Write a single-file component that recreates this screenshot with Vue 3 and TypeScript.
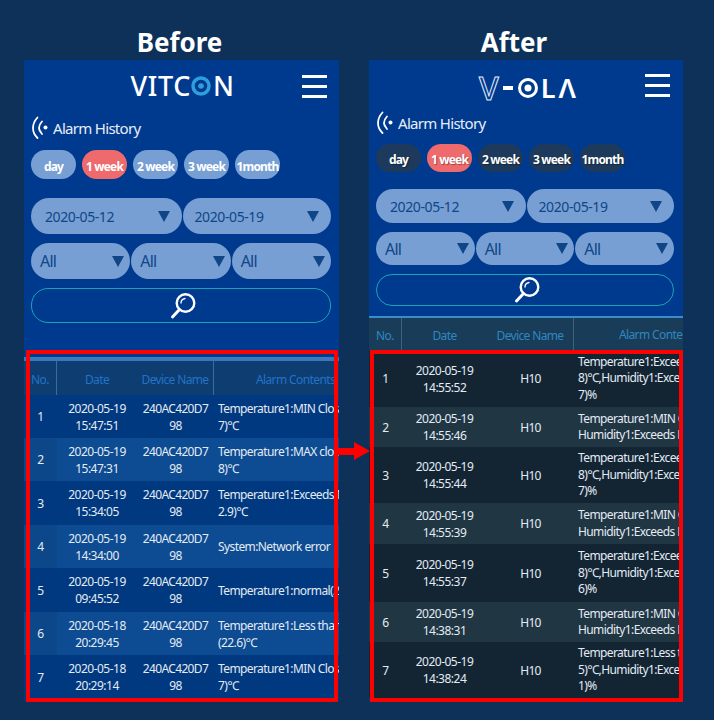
<script setup lang="ts">
interface Row {
  no: number;
  date: string;
  time: string;
  device: string[];
  content: string[];
  height: number;
}

const periods = ["day", "1 week", "2 week", "3 week", "1month"];

const beforeRows: Row[] = [
  { no: 1, date: "2020-05-19", time: "15:47:51", device: ["240AC420D7", "98"], content: ["Temperature1:MIN Close(28.", "7)℃"], height: 43 },
  { no: 2, date: "2020-05-19", time: "15:47:31", device: ["240AC420D7", "98"], content: ["Temperature1:MAX close(28.", "8)℃"], height: 43 },
  { no: 3, date: "2020-05-19", time: "15:34:05", device: ["240AC420D7", "98"], content: ["Temperature1:Exceeds MAX(3", "2.9)℃"], height: 44 },
  { no: 4, date: "2020-05-19", time: "14:34:00", device: ["240AC420D7", "98"], content: ["System:Network error"], height: 43 },
  { no: 5, date: "2020-05-19", time: "09:45:52", device: ["240AC420D7", "98"], content: ["Temperature1:normal(25.1)℃"], height: 44 },
  { no: 6, date: "2020-05-18", time: "20:29:45", device: ["240AC420D7", "98"], content: ["Temperature1:Less than MIN", "(22.6)℃"], height: 43 },
  { no: 7, date: "2020-05-18", time: "20:29:14", device: ["240AC420D7", "98"], content: ["Temperature1:MIN Close(28.", "7)℃"], height: 44 },
];

const afterRows: Row[] = [
  { no: 1, date: "2020-05-19", time: "14:55:52", device: ["H10"], content: ["Temperature1:Exceeds MAX(3", "8)℃,Humidity1:Exceeds MAX", "7)%"], height: 57 },
  { no: 2, date: "2020-05-19", time: "14:55:46", device: ["H10"], content: ["Temperature1:MIN Close(28)", "Humidity1:Exceeds MAX(7)"], height: 40 },
  { no: 3, date: "2020-05-19", time: "14:55:44", device: ["H10"], content: ["Temperature1:Exceeds MAX(3", "8)℃,Humidity1:Exceeds MAX", "7)%"], height: 56 },
  { no: 4, date: "2020-05-19", time: "14:55:39", device: ["H10"], content: ["Temperature1:MIN Close(28)", "Humidity1:Exceeds MAX(7)"], height: 41 },
  { no: 5, date: "2020-05-19", time: "14:55:37", device: ["H10"], content: ["Temperature1:Exceeds MAX(3", "8)℃,Humidity1:Exceeds MAX", "6)%"], height: 58 },
  { no: 6, date: "2020-05-19", time: "14:38:31", device: ["H10"], content: ["Temperature1:MIN Close(28)", "Humidity1:Exceeds MAX(7)"], height: 40 },
  { no: 7, date: "2020-05-19", time: "14:38:24", device: ["H10"], content: ["Temperature1:Less than MIN(2", "5)℃,Humidity1:Exceeds MAX", "1)%"], height: 56 },
];

const panels = [
  { key: "before", title: "Before", rows: beforeRows },
  { key: "after", title: "After", rows: afterRows },
];
</script>

<template>
  <div class="page">
    <section v-for="panel in panels" :key="panel.key" class="col" :class="panel.key">
      <h2 class="title">{{ panel.title }}</h2>
      <div class="phone">
        <header class="top">
          <div v-if="panel.key === 'before'" class="logo vitcon">
            <span>VITC</span>
            <svg class="ring" width="20" height="20" viewBox="0 0 20 20">
              <circle cx="10" cy="10" r="8" fill="none" stroke="#2e9fdc" stroke-width="3.5" />
              <circle cx="10" cy="10" r="2.8" fill="#2e9fdc" />
            </svg>
            <span>N</span>
          </div>
          <div v-else class="logo vola">
            <span class="hollow">V</span>
            <span class="dash"></span>
            <svg class="ring" width="20" height="20" viewBox="0 0 20 20">
              <circle cx="10" cy="10" r="8.5" fill="none" stroke="#fff" stroke-width="3" />
              <circle cx="10" cy="10" r="3.5" fill="#fff" />
            </svg>
            <span>LΛ</span>
          </div>
          <div class="burger"><i></i><i></i><i></i></div>
        </header>

        <div class="heading">
          <svg width="18" height="24" viewBox="0 0 18 24" fill="none" stroke="#fff" stroke-linecap="round">
            <path d="M6.5 1.5C.5 8 .5 16 6.5 22" stroke-width="1.8" />
            <path d="M11 5.5C7.2 9.5 7.2 14 11 18" stroke-width="1.8" />
            <circle cx="14.5" cy="11.5" r="2" fill="#fff" stroke="none" />
          </svg>
          <span>Alarm History</span>
        </div>

        <div class="periods">
          <span v-for="p in periods" :key="p" class="period" :class="{ on: p === '1 week' }">{{ p }}</span>
        </div>

        <div class="filters dates">
          <div class="select"><span>2020-05-12</span><b class="caret"></b></div>
          <div class="select"><span>2020-05-19</span><b class="caret"></b></div>
        </div>
        <div class="filters alls">
          <div class="select"><span>All</span><b class="caret"></b></div>
          <div class="select"><span>All</span><b class="caret"></b></div>
          <div class="select"><span>All</span><b class="caret"></b></div>
        </div>
        <div class="search">
          <svg width="26" height="28" viewBox="0 0 26 28" fill="none" stroke="#fff" stroke-linecap="round">
            <circle cx="15.5" cy="11" r="8.8" stroke-width="2.4" />
            <path d="M9.5 17.5L2.5 25" stroke-width="3" />
            <path d="M11 11C11 8.5 12.5 7 15 6.5" stroke-width="1.3" />
          </svg>
        </div>

        <div class="table">
          <div class="row head">
            <div class="c no">No.</div>
            <div class="c date">Date</div>
            <div class="c device">Device Name</div>
            <div class="c content"><span class="alarm-head">Alarm Contents</span></div>
          </div>
          <div
            v-for="r in panel.rows"
            :key="r.no"
            class="row body"
            :style="{ height: r.height + 'px' }"
          >
            <div class="c no">{{ r.no }}</div>
            <div class="c date">{{ r.date }}<br />{{ r.time }}</div>
            <div class="c device">
              <span>
                <template v-for="d in r.device" :key="d">{{ d }}<br /></template>
              </span>
            </div>
            <div class="c content">
              <div v-for="line in r.content" :key="line">{{ line }}</div>
            </div>
          </div>
        </div>
      </div>
      <div class="redbox"></div>
    </section>

    <svg class="arrow" width="34" height="18" viewBox="0 0 34 18">
      <path d="M0 6H17V0L33 9L17 18V13H0Z" fill="#f00" />
    </svg>
  </div>
</template>

<style>
html,
body {
  margin: 0;
  background: #0d3159;
}
</style>

<style scoped>
.page {
  position: relative;
  width: 714px;
  height: 720px;
  overflow: hidden;
  display: flex;
  gap: 30px;
  padding: 26px 0 0 24px;
  box-sizing: border-box;
  background: #0d3159;
  font-family: "Noto Sans", "Noto Sans CJK KR", sans-serif;
  color: #fff;
}
.col {
  position: relative;
  width: 315px;
}
.col.after {
  width: 314px;
}
.title {
  margin: 0;
  height: 34px;
  line-height: 33px;
  font-size: 26px;
  font-weight: 700;
  text-align: center;
}
.before .title {
  width: 311px;
}
.after .title {
  width: 290px;
}
.phone {
  position: relative;
  height: 641px;
  background: #003a8f;
}
.top {
  position: relative;
  height: 48px;
  display: flex;
  justify-content: center;
  padding-top: 13px;
  box-sizing: border-box;
}
.logo {
  display: flex;
  align-items: center;
  height: 26px;
  font-size: 27px;
  font-weight: 500;
  line-height: 26px;
}
.vitcon {
  margin-left: 2px;
  letter-spacing: 0.6px;
}
.vitcon .ring {
  margin: 0 2px 0 0;
}
.vola {
  margin: 2px 0 0 0;
  font-weight: 600;
  letter-spacing: 3px;
  transform: translateX(3px);
}
.hollow {
  font-size: 32px;
  font-weight: 500;
  letter-spacing: 0;
  color: transparent;
  -webkit-text-stroke: 1px #e3ebf7;
}
.dash {
  width: 10px;
  height: 4px;
  background: #fff;
  margin: 0 5px 0 4px;
}
.vola .ring {
  margin-right: 3px;
}
.burger {
  position: absolute;
  right: 12px;
  top: 15px;
  width: 25px;
  display: flex;
  flex-direction: column;
  gap: 7px;
}
.after .burger {
  top: 14px;
  right: 13px;
}
.burger i {
  display: block;
  height: 3px;
  background: #fff;
}
.heading {
  display: flex;
  align-items: center;
  gap: 4px;
  height: 26px;
  margin: 7px 0 0 7px;
  font-size: 15px;
  letter-spacing: -0.7px;
  color: #e8eef8;
}
.after .heading {
  margin-top: 2px;
}
.periods {
  display: flex;
  gap: 6px;
  margin: 9px 0 0 7px;
}
.after .periods {
  margin-top: 8px;
}
.period {
  width: 45px;
  height: 29px;
  border-radius: 15px;
  background: #779fd3;
  font-size: 12px;
  font-weight: 700;
  line-height: 33px;
  text-align: center;
  letter-spacing: -0.8px;
  white-space: nowrap;
}
.after .period {
  height: 28px;
  line-height: 32px;
  background: #1d3a5c;
  text-shadow: 1px 1px 1px rgba(0, 0, 0, 0.35);
}
.period.on,
.after .period.on {
  background: #ee6a6c;
}
.filters {
  display: flex;
  gap: 1px;
  margin: 0 8px 0 7px;
}
.after .filters {
  margin-right: 9px;
}
.dates {
  margin-top: 19px;
}
.after .dates {
  margin-top: 17px;
}
.alls {
  margin-top: 9px;
}
.select {
  flex: 1;
  height: 36px;
  border-radius: 18px;
  background: #779fd3;
  color: #0f4688;
  display: flex;
  align-items: center;
  justify-content: space-between;
  box-sizing: border-box;
  font-size: 16px;
  letter-spacing: -0.8px;
  padding: 0 6px 0 9px;
}
.after .select {
  height: 33px;
  border-radius: 17px;
}
.after .dates .select {
  height: 34px;
}
.dates .select {
  font-size: 14px;
  letter-spacing: -0.4px;
  padding: 0 12px 0 14px;
}
.dates .select:last-child {
  padding-left: 12px;
}
.caret {
  display: block;
  width: 0;
  height: 0;
  border-left: 6px solid transparent;
  border-right: 6px solid transparent;
  border-top: 11px solid #0f4688;
}
.search {
  margin: 9px 8px 0 7px;
  height: 33px;
  border: 1px solid #1aa3b4;
  border-radius: 17px;
  display: flex;
  align-items: center;
  justify-content: center;
}
.search svg {
  margin-left: 4px;
}
.after .search {
  height: 30px;
  margin-right: 9px;
}
.table {
  position: absolute;
  left: 0;
  right: 0;
  top: 297px;
  overflow: hidden;
  background: #003a8f;
}
.after .table {
  top: 256px;
}
.row {
  display: flex;
  font-size: 12px;
  letter-spacing: -0.5px;
  white-space: nowrap;
}
.head {
  height: 34px;
  border-top: 4px solid #3f78b8;
  background: #0e3d72;
  color: #2173c6;
  letter-spacing: -0.6px;
  align-items: stretch;
}
.after .head {
  height: 32px;
  border-top: 2px solid #3a8ccb;
  background: #193d58;
  color: #2f87c0;
}
.c {
  flex: none;
  display: flex;
  align-items: center;
  justify-content: center;
  text-align: center;
  box-sizing: border-box;
  line-height: 17px;
}
.head .c {
  padding-top: 3px;
}
.no {
  width: 33px;
}
.date {
  width: 80px;
}
.device {
  width: 77px;
  letter-spacing: -0.65px;
}
.content {
  flex: 1;
  display: block;
  text-align: left;
  overflow: hidden;
  padding-left: 4px;
  align-self: center;
  letter-spacing: -0.6px;
}
.head .content {
  align-self: stretch;
  display: flex;
  align-items: center;
}
.alarm-head {
  margin-left: 34px;
}
.after .alarm-head {
  margin-left: 56px;
}
.head .no,
.head .device {
  border-right: 1px solid #3b6c9e;
}
.after .head .no,
.after .head .device {
  border-right-color: #3f6378;
}
.after .date {
  width: 85px;
}
.after .device {
  width: 87px;
}
.after .content {
  line-height: 16.5px;
}
.body {
  color: #e4ebf4;
  background: #00397f;
}
.before .body:nth-child(odd) {
  background: #0d4c92;
}
.before .body:nth-child(odd) .no {
  background: #0b4789;
}
.after .body {
  background: #132533;
}
.after .body:nth-child(odd) {
  background: #203643;
}
.redbox {
  position: absolute;
  left: 2px;
  right: 1px;
  top: 324px;
  height: 352px;
  border: 4px solid #f00;
  box-sizing: border-box;
  pointer-events: none;
}
.after .redbox {
  left: 1px;
  right: 0;
}
.arrow {
  position: absolute;
  left: 337px;
  top: 442px;
}
</style>
